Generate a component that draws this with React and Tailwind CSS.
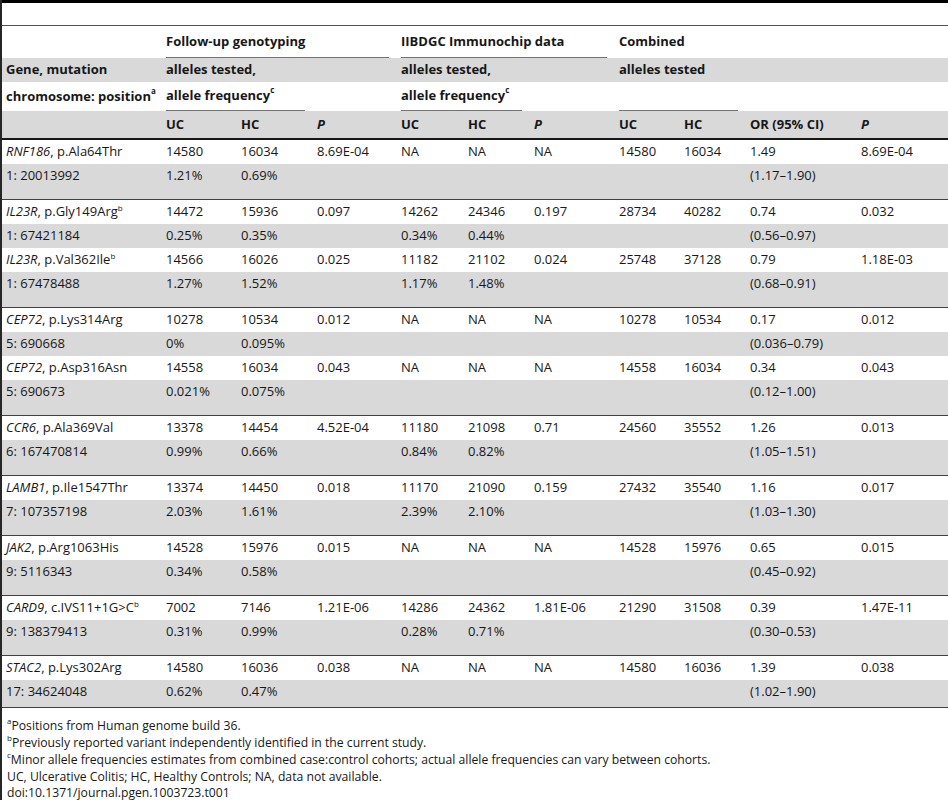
const COLS = 'grid grid-cols-[158px_75px_76px_84px_67px_66px_85px_65px_66px_111px_1fr]';

const groups = [
  [
    { gene: 'RNF186', mut: ', p.Ala64Thr', pos: '1: 20013992',
      v: ['14580', '16034', '8.69E-04', 'NA', 'NA', 'NA', '14580', '16034', '1.49', '8.69E-04'],
      f: ['1.21%', '0.69%', '', '', '', '', '', '', '(1.17–1.90)', ''] },
  ],
  [
    { gene: 'IL23R', mut: ', p.Gly149Arg', sup: 'b', pos: '1: 67421184',
      v: ['14472', '15936', '0.097', '14262', '24346', '0.197', '28734', '40282', '0.74', '0.032'],
      f: ['0.25%', '0.35%', '', '0.34%', '0.44%', '', '', '', '(0.56–0.97)', ''] },
    { gene: 'IL23R', mut: ', p.Val362Ile', sup: 'b', pos: '1: 67478488',
      v: ['14566', '16026', '0.025', '11182', '21102', '0.024', '25748', '37128', '0.79', '1.18E-03'],
      f: ['1.27%', '1.52%', '', '1.17%', '1.48%', '', '', '', '(0.68–0.91)', ''] },
  ],
  [
    { gene: 'CEP72', mut: ', p.Lys314Arg', pos: '5: 690668',
      v: ['10278', '10534', '0.012', 'NA', 'NA', 'NA', '10278', '10534', '0.17', '0.012'],
      f: ['0%', '0.095%', '', '', '', '', '', '', '(0.036–0.79)', ''] },
    { gene: 'CEP72', mut: ', p.Asp316Asn', pos: '5: 690673',
      v: ['14558', '16034', '0.043', 'NA', 'NA', 'NA', '14558', '16034', '0.34', '0.043'],
      f: ['0.021%', '0.075%', '', '', '', '', '', '', '(0.12–1.00)', ''] },
  ],
  [
    { gene: 'CCR6', mut: ', p.Ala369Val', pos: '6: 167470814',
      v: ['13378', '14454', '4.52E-04', '11180', '21098', '0.71', '24560', '35552', '1.26', '0.013'],
      f: ['0.99%', '0.66%', '', '0.84%', '0.82%', '', '', '', '(1.05–1.51)', ''] },
  ],
  [
    { gene: 'LAMB1', mut: ', p.Ile1547Thr', pos: '7: 107357198',
      v: ['13374', '14450', '0.018', '11170', '21090', '0.159', '27432', '35540', '1.16', '0.017'],
      f: ['2.03%', '1.61%', '', '2.39%', '2.10%', '', '', '', '(1.03–1.30)', ''] },
  ],
  [
    { gene: 'JAK2', mut: ', p.Arg1063His', pos: '9: 5116343',
      v: ['14528', '15976', '0.015', 'NA', 'NA', 'NA', '14528', '15976', '0.65', '0.015'],
      f: ['0.34%', '0.58%', '', '', '', '', '', '', '(0.45–0.92)', ''] },
  ],
  [
    { gene: 'CARD9', mut: ', c.IVS11+1G>C', sup: 'b', pos: '9: 138379413',
      v: ['7002', '7146', '1.21E-06', '14286', '24362', '1.81E-06', '21290', '31508', '0.39', '1.47E-11'],
      f: ['0.31%', '0.99%', '', '0.28%', '0.71%', '', '', '', '(0.30–0.53)', ''] },
  ],
  [
    { gene: 'STAC2', mut: ', p.Lys302Arg', pos: '17: 34624048',
      v: ['14580', '16036', '0.038', 'NA', 'NA', 'NA', '14580', '16036', '1.39', '0.038'],
      f: ['0.62%', '0.47%', '', '', '', '', '', '', '(1.02–1.90)', ''] },
  ],
];

const Sup = ({ children }) => <sup className="text-[8px] top-[-0.7em]">{children}</sup>;

const Cells = ({ first, values }) => (
  <>
    <div className="pl-1 flex items-center whitespace-nowrap">{first}</div>
    {values.map((val, i) => (
      <div key={i} className="pl-[6px] flex items-center whitespace-nowrap">{val}</div>
    ))}
  </>
);

const App = () => {
  return (
    <div className="h-[800px] w-full overflow-hidden bg-white border-l-2 border-l-neutral-800 text-[13px] text-neutral-900 font-['Open_Sans','Liberation_Sans',sans-serif]">
      <div className="h-[26px] border-t-[3px] border-t-black border-b border-b-neutral-600" />

      {/* header */}
      <div className="font-bold">
        <div className={`${COLS} h-[32px]`}>
          <div />
          <div className="col-span-3 mx-[6px] flex items-center border-b border-b-neutral-500">Follow-up genotyping</div>
          <div className="col-span-3 mx-[6px] flex items-center border-b border-b-neutral-500">IIBDGC Immunochip data</div>
          <div className="col-span-4 pl-[6px] flex items-center">Combined</div>
        </div>
        <div className={`${COLS} h-[24px] bg-[rgb(217,217,217)]`}>
          <div className="pl-1 flex items-center">Gene, mutation</div>
          <div className="col-span-3 pl-[6px] flex items-center">alleles tested,</div>
          <div className="col-span-3 pl-[6px] flex items-center">alleles tested,</div>
          <div className="col-span-4 pl-[6px] flex items-center">alleles tested</div>
        </div>
        <div className={`${COLS} h-[29px]`}>
          <div className="pl-1 flex items-center whitespace-nowrap">chromosome: position<Sup>a</Sup></div>
          <div className="col-span-2 mx-[6px] flex items-center border-b border-b-neutral-500">allele frequency<Sup>c</Sup></div>
          <div />
          <div className="col-span-2 mx-[6px] flex items-center border-b border-b-neutral-500">allele frequency<Sup>c</Sup></div>
          <div />
          <div className="col-span-2 mx-[6px] border-b border-b-neutral-500" />
          <div />
          <div />
        </div>
        <div className={`${COLS} h-[29px] bg-[rgb(217,217,217)] border-b-2 border-b-neutral-900`}>
          <Cells
            first=""
            values={['UC', 'HC', <i key="p1">P</i>, 'UC', 'HC', <i key="p2">P</i>, 'UC', 'HC', 'OR (95% CI)', <i key="p3">P</i>]}
          />
        </div>
      </div>

      {/* body */}
      {groups.map((group, gi) => {
        const last = gi === groups.length - 1;
        return (
          <div key={gi} className="border-b border-b-neutral-700">
            {group.map((row, ri) => (
              <div key={ri}>
                <div className={`${COLS} h-[24px]`}>
                  <Cells
                    first={<span><i>{row.gene}</i>{row.mut}{row.sup && <Sup>{row.sup}</Sup>}</span>}
                    values={row.v}
                  />
                </div>
                <div className={`${COLS} h-[24px] bg-[rgb(217,217,217)]`}>
                  <Cells first={row.pos} values={row.f} />
                </div>
              </div>
            ))}
            <div className={`bg-[rgb(217,217,217)] ${last ? 'h-[3px]' : 'h-[11px]'}`} />
          </div>
        );
      })}

      {/* footnotes */}
      <div className="pt-[9px] pl-[5px] text-[12.2px] leading-[17px]">
        <p><Sup>a</Sup>Positions from Human genome build 36.</p>
        <p><Sup>b</Sup>Previously reported variant independently identified in the current study.</p>
        <p><Sup>c</Sup>Minor allele frequencies estimates from combined case:control cohorts; actual allele frequencies can vary between cohorts.</p>
        <p>UC, Ulcerative Colitis; HC, Healthy Controls; NA, data not available.</p>
        <p className="leading-[15px]">doi:10.1371/journal.pgen.1003723.t001</p>
      </div>
    </div>
  );
};

export default App;
